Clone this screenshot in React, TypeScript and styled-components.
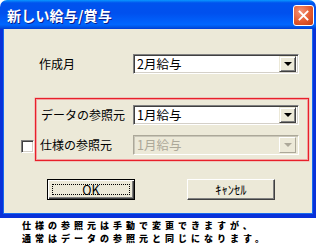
import React from "react";
import styled, { createGlobalStyle } from "styled-components";

const Global = createGlobalStyle`
  html, body { margin: 0; padding: 0; background: #ffffff; }
  body { font-family: "Noto Sans CJK JP", "Liberation Sans", sans-serif; }
`;

const JP = `"Noto Sans CJK JP", "Liberation Sans", sans-serif`;

const Page = styled.div`
  display: flex;
  flex-direction: column;
  width: 321px;
  height: 250px;
  overflow: hidden;
`;

const Window = styled.div`
  display: flex;
  flex-direction: column;
  width: 316px;
  height: 218px;
`;

const TitleBar = styled.div`
  display: flex;
  align-items: center;
  justify-content: space-between;
  height: 29px;
  box-sizing: border-box;
  padding: 0 2px 0 7px;
  border-radius: 7px 7px 0 0;
  background: linear-gradient(
    to bottom,
    #0997ff 0%,
    #0053ee 10%,
    #0050ee 45%,
    #0066ff 85%,
    #0055e5 93%,
    #003dd7 100%
  );
`;

const Title = styled.span`
  color: #ffffff;
  font-family: ${JP};
  font-size: 14px;
  font-weight: 700;
  letter-spacing: 0.2px;
  text-shadow: 1px 1px 0 #0a1e8a;
  margin-top: 1px;
`;

const CloseButton = styled.div`
  width: 21px;
  height: 21px;
  box-sizing: border-box;
  border: 1px solid #ffffff;
  border-radius: 3px;
  background: radial-gradient(circle at 35% 30%, #f49478 0%, #e35a2f 55%, #c23a12 100%);
  display: flex;
  align-items: center;
  justify-content: center;
  margin-top: 1px;
`;

const Body = styled.div`
  position: relative;
  flex: 1;
  display: flex;
  flex-direction: column;
  background: #ece9d8;
  border-left: 3px solid #0831d9;
  border-right: 3px solid #0831d9;
  border-bottom: 4px solid #0831d9;
  box-shadow: inset 1px 0 0 #166aee, inset -1px 0 0 #166aee, inset 0 -1px 0 #166aee;
  padding: 24px 0 0 0;
`;

const Row = styled.div<{ $gap: number }>`
  display: grid;
  grid-template-columns: 13px 89px 166px;
  column-gap: 5px;
  align-items: center;
  padding-left: 18px;
  height: 20px;
  margin-bottom: ${(p) => p.$gap}px;
`;

const Label = styled.span<{ $shift?: number }>`
  grid-column: 2;
  font-family: ${JP};
  font-size: 12px;
  color: #000000;
  white-space: nowrap;
  line-height: 20px;
  margin-top: 1px;
  padding-left: ${(p) => p.$shift ?? 0}px;
`;

const Check = styled.span`
  grid-column: 1;
  width: 13px;
  height: 13px;
  box-sizing: border-box;
  background: #ffffff;
  border: 1px solid;
  border-color: #808080 #ffffff #ffffff #808080;
  box-shadow: inset 1px 1px 0 #404040, inset -1px -1px 0 #d4d0c8;
  margin-top: 4px;
`;

const Combo = styled.div<{ $disabled?: boolean }>`
  grid-column: 3;
  display: flex;
  align-items: center;
  justify-content: space-between;
  height: 20px;
  box-sizing: border-box;
  padding: 2px 2px 2px 3px;
  background: ${(p) => (p.$disabled ? "#ece9d8" : "#ffffff")};
  border: 1px solid;
  border-color: ${(p) =>
    p.$disabled ? "#aca899 #ffffff #ffffff #aca899" : "#808080 #ffffff #ffffff #808080"};
  box-shadow: ${(p) =>
    p.$disabled
      ? "inset 1px 1px 0 #c9c6b8, inset -1px -1px 0 #ece9d8"
      : "inset 1px 1px 0 #404040, inset -1px -1px 0 #d4d0c8"};
`;

const ComboText = styled.span<{ $disabled?: boolean }>`
  font-family: ${JP};
  font-size: 12.5px;
  color: ${(p) => (p.$disabled ? "#aca899" : "#000000")};
  line-height: 16px;
`;

const DropButton = styled.div<{ $disabled?: boolean }>`
  width: 17px;
  height: 16px;
  box-sizing: border-box;
  background: #ece9d8;
  border: 1px solid;
  border-color: ${(p) =>
    p.$disabled ? "#ffffff #aca899 #aca899 #ffffff" : "#ece9d8 #404040 #404040 #ece9d8"};
  box-shadow: ${(p) =>
    p.$disabled ? "none" : "inset 1px 1px 0 #ffffff, inset -1px -1px 0 #808080"};
  display: flex;
  align-items: center;
  justify-content: center;
`;

const Arrow = styled.span<{ $disabled?: boolean }>`
  width: 0;
  height: 0;
  border-left: 4px solid transparent;
  border-right: 4px solid transparent;
  border-top: 4px solid ${(p) => (p.$disabled ? "#aca899" : "#000000")};
  margin-top: 1px;
`;

const Buttons = styled.div`
  display: flex;
  gap: 52px;
  padding-left: 44px;
  margin-top: 25px;
`;

const Button = styled.div<{ $default?: boolean }>`
  width: 88px;
  height: 21px;
  box-sizing: border-box;
  display: flex;
  align-items: center;
  justify-content: center;
  background: #ece9d8;
  border: 1px solid;
  border-color: ${(p) => (p.$default ? "#000000" : "#ffffff #404040 #404040 #ffffff")};
  box-shadow: ${(p) =>
    p.$default
      ? "inset 1px 1px 0 #ffffff, inset -1px -1px 0 #404040, inset -2px -2px 0 #808080"
      : "inset -1px -1px 0 #808080"};
  font-family: ${JP};
  font-size: 12.5px;
  color: #000000;
  position: relative;
`;

const Focus = styled.span`
  position: absolute;
  left: 4px;
  top: 4px;
  right: 4px;
  bottom: 4px;
  border: 1px dotted #000000;
`;

const ButtonText = styled.span`
  position: relative;
  line-height: 15px;
`;

const Annotation = styled.div`
  position: absolute;
  left: 32px;
  top: 69px;
  width: 274px;
  height: 63px;
  box-sizing: border-box;
  border: 1px solid #e8202a;
  box-shadow: inset 0 0 0 1px #f2a0a0, 0 0 0 0.5px #f0a0a0;
  pointer-events: none;
`;

const Caption = styled.p`
  margin: 0;
  padding: 1px 0 0 22px;
  font-family: ${JP};
  font-size: 9px;
  font-weight: 900;
  letter-spacing: 4px;
  line-height: 13.2px;
  color: #000000;
  white-space: nowrap;
`;

function Close() {
  return (
    <CloseButton>
      <svg width="11" height="11" viewBox="0 0 11 11">
        <path d="M1.5 1.5 L9.5 9.5 M9.5 1.5 L1.5 9.5" stroke="#ffffff" strokeWidth="1.8" strokeLinecap="square" />
      </svg>
    </CloseButton>
  );
}

function ComboBox({ value, disabled }: { value: string; disabled?: boolean }) {
  return (
    <Combo $disabled={disabled}>
      <ComboText $disabled={disabled}>{value}</ComboText>
      <DropButton $disabled={disabled}>
        <Arrow $disabled={disabled} />
      </DropButton>
    </Combo>
  );
}

export default function App() {
  return (
    <>
      <Global />
      <Page>
        <Window>
          <TitleBar>
            <Title>新しい給与/賞与</Title>
            <Close />
          </TitleBar>
          <Body>
            <Row $gap={31}>
              <Label>作成月</Label>
              <ComboBox value="2月給与" />
            </Row>
            <Row $gap={10}>
              <Label $shift={2}>データの参照元</Label>
              <ComboBox value="1月給与" />
            </Row>
            <Row $gap={0}>
              <Check />
              <Label $shift={1}>仕様の参照元</Label>
              <ComboBox value="1月給与" disabled />
            </Row>
            <Buttons>
              <Button $default>
                <Focus />
                <ButtonText>OK</ButtonText>
              </Button>
              <Button>
                <ButtonText>ｷｬﾝｾﾙ</ButtonText>
              </Button>
            </Buttons>
            <Annotation />
          </Body>
        </Window>
        <Caption>
          仕様の参照元は手動で変更できますが、
          <br />
          通常はデータの参照元と同じになります。
        </Caption>
      </Page>
    </>
  );
}
